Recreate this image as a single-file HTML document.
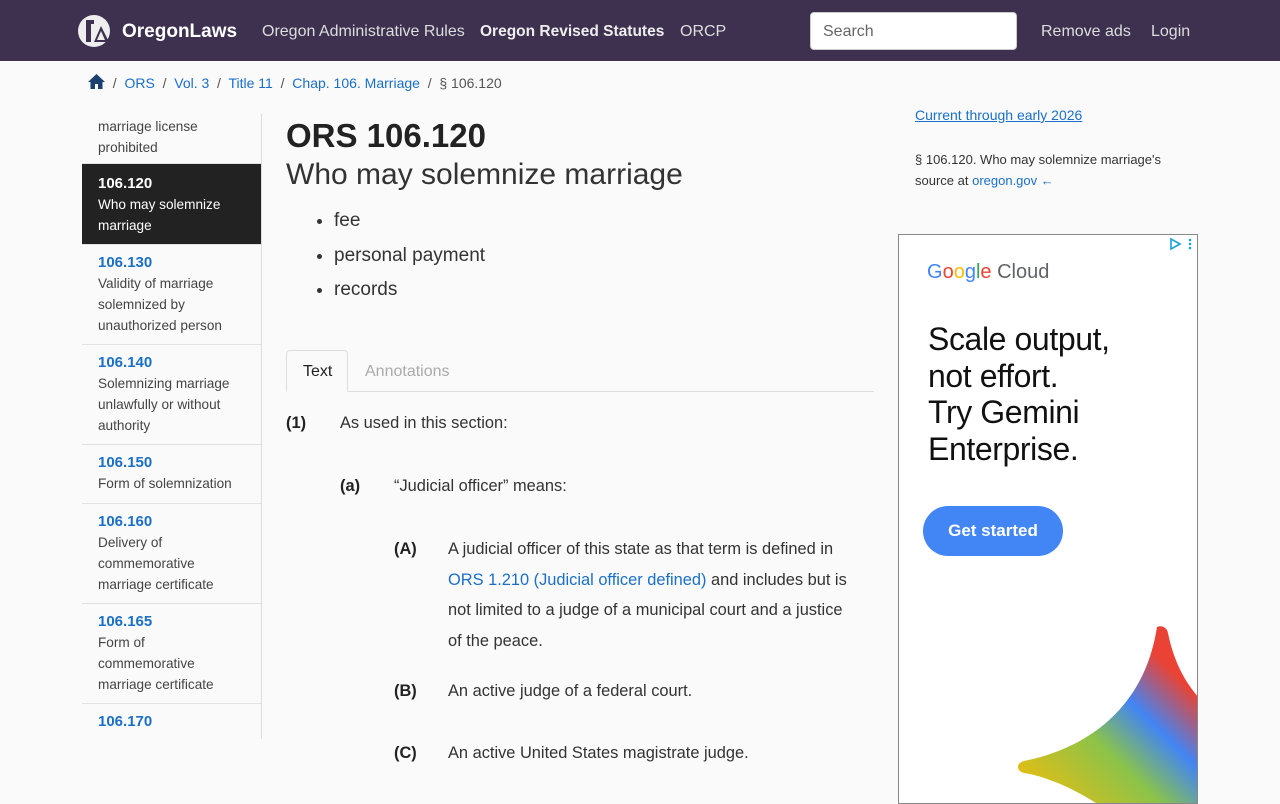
<!DOCTYPE html>
<html><head><meta charset="utf-8"><style>
*{box-sizing:border-box;margin:0;padding:0}
body{width:1280px;height:800px;overflow:hidden;background:#fafafa;font-family:"Liberation Sans",sans-serif;color:#222;position:relative}
a{color:#1a6fc9;text-decoration:none}
.hdr{position:absolute;top:0;left:0;width:1280px;height:61px;background:#3e3150;color:#ddd}
.hdr span{position:absolute;top:23px;font-size:16px}
.crumb{position:absolute;top:74px;left:88px;font-size:14px;color:#555}
.crumb a{color:#1a6fc9}
.side{position:absolute;left:82px;top:114px;width:180px;height:625px;border-right:1px solid #ddd;font-size:13.6px;line-height:21px}
.it{padding:0 16px;border-bottom:1px solid #e2e2e2}
.it b{color:#1a6fc9;font-size:15px;display:block}
.abs{position:absolute}
li{margin-left:48px;font-size:19px;line-height:34.5px}
.p{position:absolute;font-size:16.4px;line-height:30.5px;color:#333}
.p b{position:absolute;left:-54px;color:#222}
</style></head><body>
<div class="hdr">
<svg class="abs" style="left:77px;top:14px" width="34" height="34" viewBox="0 0 34 34"><circle cx="17" cy="17" r="16" fill="#eee"/><path d="M9 6h8v4h-3v18h-5z" fill="#3e3150"/><path d="M17 28l7-16 8 16z" fill="#3e3150"/><path d="M20 26l4-9 4 9z" fill="#eee"/></svg>
<span style="left:122px;top:21px;font-size:19px;font-weight:bold;color:#fff">OregonLaws</span>
<span style="left:262px">Oregon Administrative Rules</span>
<span style="left:480px;font-weight:bold;color:#eee;font-size:15.5px">Oregon Revised Statutes</span>
<span style="left:680px">ORCP</span>
<div class="abs" style="left:810px;top:12px;width:207px;height:38px;background:#fff;border-radius:4px;border:1px solid #ccc"><span style="left:12px;top:10px;color:#666;font-size:16px">Search</span></div>
<span style="left:1041px">Remove ads</span>
<span style="left:1151px">Login</span>
</div>
<div class="crumb"><svg width="17" height="15" viewBox="0 0 17 15" style="vertical-align:-1px"><path d="M8.5 0L0 8h2.5v7h4.5v-5h3v5h4.5V8H17z" fill="#1a3f70"/></svg> &nbsp;/&nbsp; <a>ORS</a> &nbsp;/&nbsp; <a>Vol. 3</a> &nbsp;/&nbsp; <a>Title 11</a> &nbsp;/&nbsp; <a>Chap. 106. Marriage</a> &nbsp;/&nbsp; § 106.120</div>
<div class="side">
<div class="it" style="height:50px;padding-top:2px;color:#444">marriage license<br>prohibited</div>
<div class="it" style="height:81px;background:#222;color:#fff;padding-top:9px"><b style="color:#fff">106.120</b>Who may solemnize<br>marriage</div>
<div class="it" style="height:100px;padding-top:7px;color:#444"><b>106.130</b>Validity of marriage<br>solemnized by<br>unauthorized person</div>
<div class="it" style="height:100px;padding-top:7px;color:#444"><b>106.140</b>Solemnizing marriage<br>unlawfully or without<br>authority</div>
<div class="it" style="height:59px;padding-top:7px;color:#444"><b>106.150</b>Form of solemnization</div>
<div class="it" style="height:100px;padding-top:7px;color:#444"><b>106.160</b>Delivery of<br>commemorative<br>marriage certificate</div>
<div class="it" style="height:100px;padding-top:7px;color:#444"><b>106.165</b>Form of<br>commemorative<br>marriage certificate</div>
<div class="it" style="border:0;padding-top:7px"><b>106.170</b></div>
</div>
<div class="abs" style="left:286px;top:117px;font-size:33px;font-weight:bold">ORS 106.120</div>
<div class="abs" style="left:286px;top:158px;font-size:30px;font-weight:300;color:#333">Who may solemnize marriage</div>
<ul class="abs" style="left:286px;top:204px;color:#333"><li>fee</li><li>personal payment</li><li>records</li></ul>
<div class="abs" style="left:286px;top:391px;width:588px;border-top:1px solid #ddd"></div>
<div class="abs" style="left:286px;top:350px;width:62px;height:42px;border:1px solid #ddd;border-bottom:1px solid #fafafa;border-radius:4px 4px 0 0;font-size:16px;padding:12px 0 0 16px">Text</div>
<div class="abs" style="left:365px;top:363px;font-size:16px;color:#aaa">Annotations</div>
<div class="p" style="left:340px;top:408px"><b>(1)</b>As used in this section:</div>
<div class="p" style="left:394px;top:471px"><b>(a)</b>“Judicial officer” means:</div>
<div class="p" style="left:448px;top:534px;width:408px"><b>(A)</b>A judicial officer of this state as that term is defined in <a>ORS 1.210 (Judicial officer defined)</a> and includes but is not limited to a judge of a municipal court and a justice of the peace.</div>
<div class="p" style="left:448px;top:676px"><b>(B)</b>An active judge of a federal court.</div>
<div class="p" style="left:448px;top:738px"><b>(C)</b>An active United States magistrate judge.</div>
<a class="abs" style="left:915px;top:107px;font-size:14px;text-decoration:underline">Current through early 2026</a>
<div class="abs" style="left:915px;top:149px;font-size:13px;line-height:21px;color:#333">§ 106.120. Who may solemnize marriage's<br>source at <a>oregon.gov</a> <span style="color:#1a6fc9">←</span></div>
<div class="abs" style="left:898px;top:234px;width:300px;height:570px;background:#fff;border:1px solid #888;overflow:hidden">
<svg class="abs" style="left:270px;top:2px" width="28" height="14"><path d="M2 2l9 5-9 5z" fill="none" stroke="#19a3d6" stroke-width="1.6"/><circle cx="21" cy="3" r="1.3" fill="#19a3d6"/><circle cx="21" cy="7" r="1.3" fill="#19a3d6"/><circle cx="21" cy="11" r="1.3" fill="#19a3d6"/></svg>
<div class="abs" style="left:28px;top:26px;font-size:20px"><span style="color:#4285f4">G</span><span style="color:#ea4335">o</span><span style="color:#fbbc05">o</span><span style="color:#4285f4">g</span><span style="color:#34a853">l</span><span style="color:#ea4335">e</span> <span style="color:#5f6368">Cloud</span></div>
<div class="abs" style="left:29px;top:86px;font-size:32px;line-height:36.5px;color:#111;letter-spacing:-0.4px">Scale output,<br>not effort.<br>Try Gemini<br>Enterprise.</div>
<div class="abs" style="left:24px;top:271px;width:140px;height:50px;border-radius:25px;background:#4285f4;color:#fff;font-size:17px;font-weight:bold;text-align:center;line-height:50px">Get started</div>
<svg class="abs" style="left:0;top:0" width="300" height="570"><defs><linearGradient id="g" x1="0" y1="1" x2="1" y2="0"><stop offset="0" stop-color="#fbbc05"/><stop offset=".4" stop-color="#8bc34a"/><stop offset=".6" stop-color="#4285f4"/><stop offset=".8" stop-color="#ea4335"/></linearGradient></defs><path d="M258 392c4-2 10 0 11 6 6 30 18 50 31 65v107H200c-30-20-60-30-75-32-8-2-8-10 0-12 60-12 120-50 133-134z" fill="url(#g)"/></svg>
</div>
</body></html>
